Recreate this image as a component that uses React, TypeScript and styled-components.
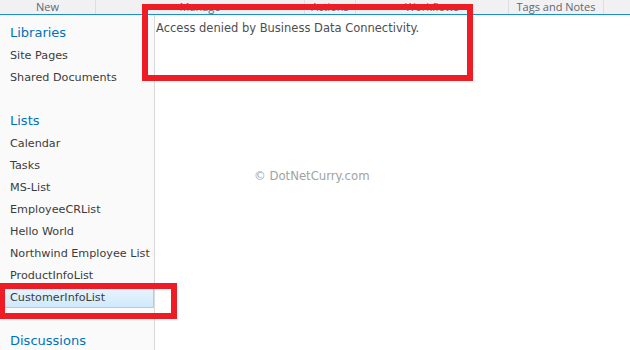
import React from "react";
import styled, { createGlobalStyle } from "styled-components";

const GlobalStyle = createGlobalStyle`
  html, body { margin: 0; padding: 0; background: #ffffff; overflow: hidden; }
  * { box-sizing: border-box; }
`;

const Page = styled.div`
  position: relative;
  width: 630px;
  height: 350px;
  overflow: hidden;
  background: #ffffff;
  font-family: "DejaVu Sans", Verdana, sans-serif;
`;

const Ribbon = styled.div`
  display: flex;
  height: 15px;
  background: #f1f1f3;
  border-bottom: 1px solid #1b8fc6;
`;

const Group = styled.div<{ $w: number }>`
  flex: 0 0 ${(p) => p.$w}px;
  border-right: 1px solid #dedede;
  text-align: center;
  font-family: "Open Sans", "Noto Sans", sans-serif;
  font-size: 11px;
  line-height: 13px;
  color: #62666e;
  white-space: nowrap;
`;

const Filler = styled.div`
  flex: 1;
`;

const Body = styled.div`
  display: flex;
  height: 335px;
`;

const Nav = styled.nav`
  flex: 0 0 155px;
  background: #fafafa;
  border-right: 1px solid #d9d9d9;
  padding-top: 7px;
  display: flex;
  flex-direction: column;
`;

const Heading = styled.div<{ $gapTop?: boolean }>`
  height: 22px;
  line-height: 22px;
  padding-left: 10px;
  margin-top: ${(p) => (p.$gapTop ? "22px" : "0")};
  font-size: 13px;
  color: #0072bc;
  white-space: nowrap;
`;

const Item = styled.div<{ $selected?: boolean }>`
  height: 22px;
  line-height: 18px;
  padding-top: 2px;
  margin-left: 4px;
  padding-left: 5px;
  border: 1px solid ${(p) => (p.$selected ? "#a6d1f1" : "transparent")};
  background: ${(p) =>
    p.$selected ? "linear-gradient(to bottom, #eaf5fd 0%, #cfe9fb 100%)" : "transparent"};
  font-size: 11.2px;
  color: #3c3c3c;
  white-space: nowrap;
`;

const Content = styled.main`
  flex: 1;
  padding: 6px 0 0 1px;
  font-size: 11.5px;
  line-height: 14px;
  color: #4e4e4e;
`;

const Watermark = styled.div`
  position: absolute;
  left: 254px;
  top: 168px;
  font-size: 11.7px;
  line-height: 16px;
  color: #a2a2a2;
`;

const Highlight = styled.div<{ $x: number; $y: number; $w: number; $h: number }>`
  position: absolute;
  left: ${(p) => p.$x}px;
  top: ${(p) => p.$y}px;
  width: ${(p) => p.$w}px;
  height: ${(p) => p.$h}px;
  border: 6px solid #ee1c25;
  pointer-events: none;
`;

const groups: [string, number][] = [
  ["New", 96],
  ["Manage", 209],
  ["Actions", 51],
  ["Workflows", 153],
  ["Tags and Notes", 95],
];

const lists = [
  "Calendar",
  "Tasks",
  "MS-List",
  "EmployeeCRList",
  "Hello World",
  "Northwind Employee List",
  "ProductInfoList",
];

export default function App() {
  return (
    <Page>
      <GlobalStyle />
      <Ribbon>
        {groups.map(([label, w]) => (
          <Group key={label} $w={w}>
            {label}
          </Group>
        ))}
        <Filler />
      </Ribbon>
      <Body>
        <Nav>
          <Heading>Libraries</Heading>
          <Item>Site Pages</Item>
          <Item>Shared Documents</Item>
          <Heading $gapTop>Lists</Heading>
          {lists.map((l) => (
            <Item key={l}>{l}</Item>
          ))}
          <Item $selected>CustomerInfoList</Item>
          <Heading $gapTop>Discussions</Heading>
        </Nav>
        <Content>Access denied by Business Data Connectivity.</Content>
      </Body>
      <Watermark>© DotNetCurry.com</Watermark>
      <Highlight $x={142} $y={4} $w={331} $h={77} />
      <Highlight $x={-1} $y={283} $w={178} $h={36} />
    </Page>
  );
}
